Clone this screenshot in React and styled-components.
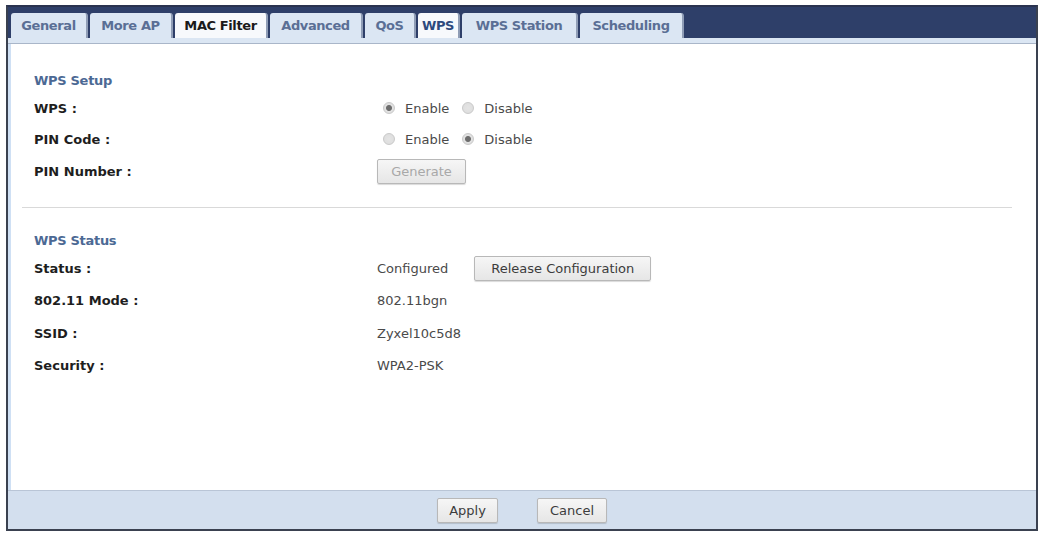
import React from 'react'
import styled, { createGlobalStyle } from 'styled-components'

const Global = createGlobalStyle`
  body {
    margin: 0;
    background: #ffffff;
    font-family: "DejaVu Sans", "Liberation Sans", sans-serif;
  }
`;

const Frame = styled.div`
  position: absolute;
  left: 6px;
  top: 5px;
  width: 1028px;
  height: 522px;
  border: 2px solid #3a4150;
  border-top-color: #2a3350;
  display: flex;
  flex-direction: column;
  background: #ffffff;
  box-shadow: inset 3px 0 0 #cfe0f4;
`;

const TabBar = styled.div`
  background: #2e3f69;
  height: 31px;
  display: flex;
  align-items: flex-end;
  padding-left: 3px;
  gap: 2px;
`;

const Tab = styled.div`
  height: 25px;
  width: ${p => p.$w}px;
  display: flex;
  align-items: center;
  justify-content: center;
  font-size: 13px;
  font-weight: 700;
  letter-spacing: -0.4px;
  border-radius: 3px 3px 0 0;
  border-right: 2px solid #8f9db6;
  background: ${p => (p.$active ? '#f7f9fc' : '#dbe6f3')};
  color: ${p => (p.$dark ? '#1a1a1a' : p.$active ? '#2d4a7e' : '#5a6f95')};
`;

const SubStrip = styled.div`
  height: 5px;
  background: #dbe6f3;
  border-bottom: 1px solid #a9b6c9;
`;

const Content = styled.div`
  flex: 1;
  padding: 26px 26px 0 26px;
  display: flex;
  flex-direction: column;
`;

const SectionTitle = styled.div`
  font-size: 13px;
  font-weight: 700;
  letter-spacing: -0.3px;
  color: #4c6994;
  height: 21px;
  line-height: 21px;
  margin-bottom: ${p => p.$mb || 0}px;
`;

const Row = styled.div`
  display: grid;
  grid-template-columns: 343px 1fr;
  align-items: center;
  height: ${p => p.$h || 32}px;
`;

const Label = styled.div`
  font-size: 13px;
  font-weight: 700;
  color: #1e1e1e;
`;

const Value = styled.div`
  display: flex;
  align-items: center;
  font-size: 13px;
  color: #4a4a4a;
  gap: ${p => p.$gap || 0}px;
`;

const RadioDot = styled.span`
  width: 12px;
  height: 12px;
  box-sizing: border-box;
  border-radius: 50%;
  border: 1px solid #c9c9c9;
  background: radial-gradient(circle, ${p => (p.$on ? '#6d6d6d 0, #6d6d6d 2.5px, #e2e2e2 3.5px' : '#e4e4e4 0')}, #dcdcdc 100%);
  margin-left: ${p => (p.$first ? 6 : 13)}px;
`;

const RadioText = styled.span`
  color: #4a4a4a;
  font-size: 13px;
  margin-left: 10px;
`;

const Button = styled.button`
  font-family: inherit;
  font-size: 13px;
  color: ${p => (p.$disabled ? '#a8a8a8' : '#3c3c3c')};
  background: linear-gradient(#f6f6f6, #e6e6e6);
  border: 1px solid #b8b8b8;
  border-radius: 2px;
  height: 25px;
  width: ${p => p.$w}px;
  padding: 0;
  box-shadow: 0 1px 1px rgba(0,0,0,0.15);
`;

const Divider = styled.div`
  height: 1px;
  background: #d9d9d9;
  margin: 20px 0 22px -12px;
  width: 990px;
`;

const Footer = styled.div`
  height: 38px;
  background: #d3dfee;
  border-top: 1px solid #b9c5d6;
  display: flex;
  align-items: center;
  justify-content: center;
  gap: 39px;
`;

const tabs = [
  { t: 'General', w: 75 },
  { t: 'More AP', w: 81 },
  { t: 'MAC Filter', w: 91, active: true, dark: true },
  { t: 'Advanced', w: 91 },
  { t: 'QoS', w: 49 },
  { t: 'WPS', w: 40, active: true },
  { t: 'WPS Station', w: 114 },
  { t: 'Scheduling', w: 102 },
];

function Radio({ on, first, children }) {
  return (
    <>
      <RadioDot $on={on} $first={first} />
      <RadioText>{children}</RadioText>
    </>
  );
}

export default function App() {
  return (
    <>
      <Global />
      <Frame>
        <TabBar>
          {tabs.map(x => (
            <Tab key={x.t} $w={x.w} $active={x.active} $dark={x.dark}>{x.t}</Tab>
          ))}
        </TabBar>
        <SubStrip />
        <Content>
          <SectionTitle $mb={2}>WPS Setup</SectionTitle>
          <Row $h={30}>
            <Label>WPS :</Label>
            <Value>
              <Radio on first>Enable</Radio>
              <Radio>Disable</Radio>
            </Value>
          </Row>
          <Row $h={32}>
            <Label>PIN Code :</Label>
            <Value>
              <Radio first>Enable</Radio>
              <Radio on>Disable</Radio>
            </Value>
          </Row>
          <Row $h={32}>
            <Label>PIN Number :</Label>
            <Value>
              <Button $disabled $w={89}>Generate</Button>
            </Value>
          </Row>
          <Divider />
          <SectionTitle $mb={2}>WPS Status</SectionTitle>
          <Row $h={31}>
            <Label>Status :</Label>
            <Value $gap={26}>
              <span>Configured</span>
              <Button $w={177}>Release Configuration</Button>
            </Value>
          </Row>
          <Row $h={33}>
            <Label>802.11 Mode :</Label>
            <Value>802.11bgn</Value>
          </Row>
          <Row $h={32}>
            <Label>SSID :</Label>
            <Value>Zyxel10c5d8</Value>
          </Row>
          <Row $h={32}>
            <Label>Security :</Label>
            <Value>WPA2-PSK</Value>
          </Row>
        </Content>
        <Footer>
          <Button $w={61}>Apply</Button>
          <Button $w={70}>Cancel</Button>
        </Footer>
      </Frame>
    </>
  );
}
